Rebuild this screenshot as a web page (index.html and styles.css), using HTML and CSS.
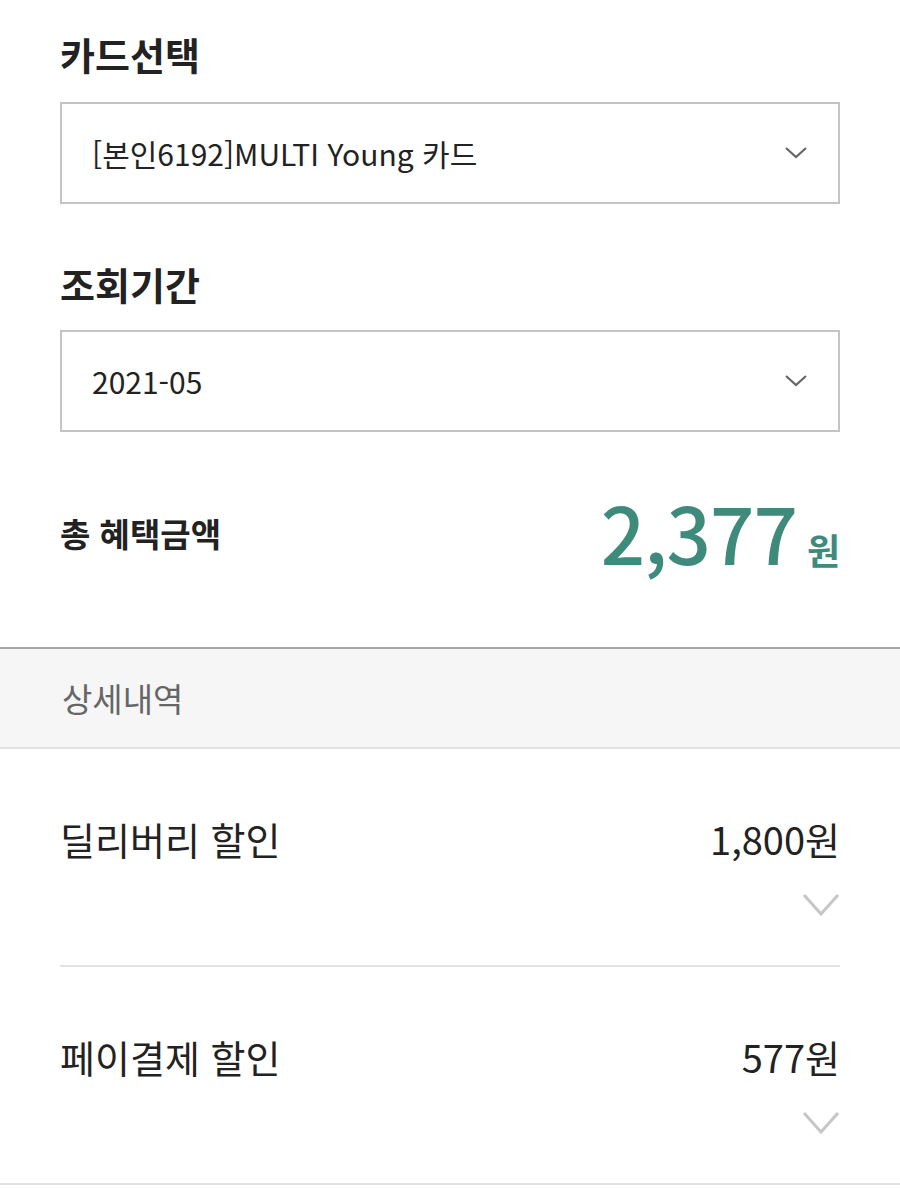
FILE: index.html
```html
<!DOCTYPE html>
<html lang="ko">
<head>
<meta charset="utf-8">
<link rel="stylesheet" href="styles.css">
</head>
<body>
<div class="top">
  <h2 class="label first">카드선택</h2>
  <div class="select">
    <span class="select-text">[본인6192]MULTI Young 카드</span>
    <svg class="select-chev" width="24" height="14" viewBox="0 0 24 14"><path d="M2 2 L12 11 L22 2" fill="none" stroke="#666" stroke-width="2.2"/></svg>
  </div>
  <h2 class="label">조회기간</h2>
  <div class="select">
    <span class="select-text">2021-05</span>
    <svg class="select-chev" width="24" height="14" viewBox="0 0 24 14"><path d="M2 2 L12 11 L22 2" fill="none" stroke="#666" stroke-width="2.2"/></svg>
  </div>
  <div class="total">
    <span class="total-label">총 혜택금액</span>
    <span class="total-amount"><span class="total-num">2,377</span><span class="total-unit">원</span></span>
  </div>
</div>
<div class="detail-head">상세내역</div>
<div class="list">
  <div class="item">
    <div class="item-inner">
      <div class="item-row"><span class="item-name">딜리버리 할인</span><span class="item-val">1,800원</span></div>
      <div class="item-chev"><svg width="38" height="24" viewBox="0 0 38 24"><path d="M2 2 L19 21 L36 2" fill="none" stroke="#c6c6c6" stroke-width="3"/></svg></div>
    </div>
  </div>
  <div class="item">
    <div class="item-inner">
      <div class="item-row"><span class="item-name">페이결제 할인</span><span class="item-val">577원</span></div>
      <div class="item-chev"><svg width="38" height="24" viewBox="0 0 38 24"><path d="M2 2 L19 21 L36 2" fill="none" stroke="#c6c6c6" stroke-width="3"/></svg></div>
    </div>
  </div>
</div>
</body>
</html>
```

FILE: styles.css
```css
html, body {
  margin: 0;
  padding: 0;
  background: #ffffff;
}
body {
  font-family: "Noto Sans CJK KR", "Noto Sans", sans-serif;
  color: #222222;
}
.top {
  padding: 0 60px;
}
.label {
  margin: 56px 0 22px;
  font-size: 38px;
  line-height: 48px;
  font-weight: 700;
  color: #222222;
}
.label.first {
  margin-top: 30px;
  margin-bottom: 24px;
}
.select {
  height: 98px;
  border: 2px solid #c4c4c4;
  display: flex;
  align-items: center;
  justify-content: space-between;
  padding: 0 30px 0 30px;
}
.select-text {
  font-size: 30px;
  color: #222222;
}
.select-chev {
  display: block;
}
.total {
  display: flex;
  align-items: center;
  justify-content: space-between;
  height: 100px;
  margin: 51px 0 64px;
}
.total-label {
  font-size: 33px;
  font-weight: 700;
  color: #222222;
}
.total-amount {
  display: flex;
  align-items: baseline;
  color: #3f8b7b;
}
.total-num {
  font-size: 78px;
  line-height: 1;
  font-weight: 500;
  letter-spacing: -1px;
}
.total-unit {
  font-size: 36px;
  font-weight: 700;
  margin-left: 10px;
}
.detail-head {
  border-top: 2px solid #a6a6a6;
  border-bottom: 2px solid #e2e2e2;
  background: #f6f6f6;
  height: 98px;
  display: flex;
  align-items: center;
  padding: 0 62px;
  font-size: 33px;
  color: #666666;
}
.list {
  border-bottom: 2px solid #e2e2e2;
}
.item {
  padding: 0 60px;
}
.item-inner {
  padding: 65px 0 48px;
  border-bottom: 2px solid #e2e2e2;
}
.item:last-child .item-inner {
  border-bottom: none;
}
.item-row {
  display: flex;
  justify-content: space-between;
  align-items: center;
  line-height: 50px;
  font-size: 38px;
  color: #222222;
}
.item-chev {
  margin-top: 29px;
  display: flex;
  justify-content: flex-end;
}
.item-chev svg {
  display: block;
}
```
